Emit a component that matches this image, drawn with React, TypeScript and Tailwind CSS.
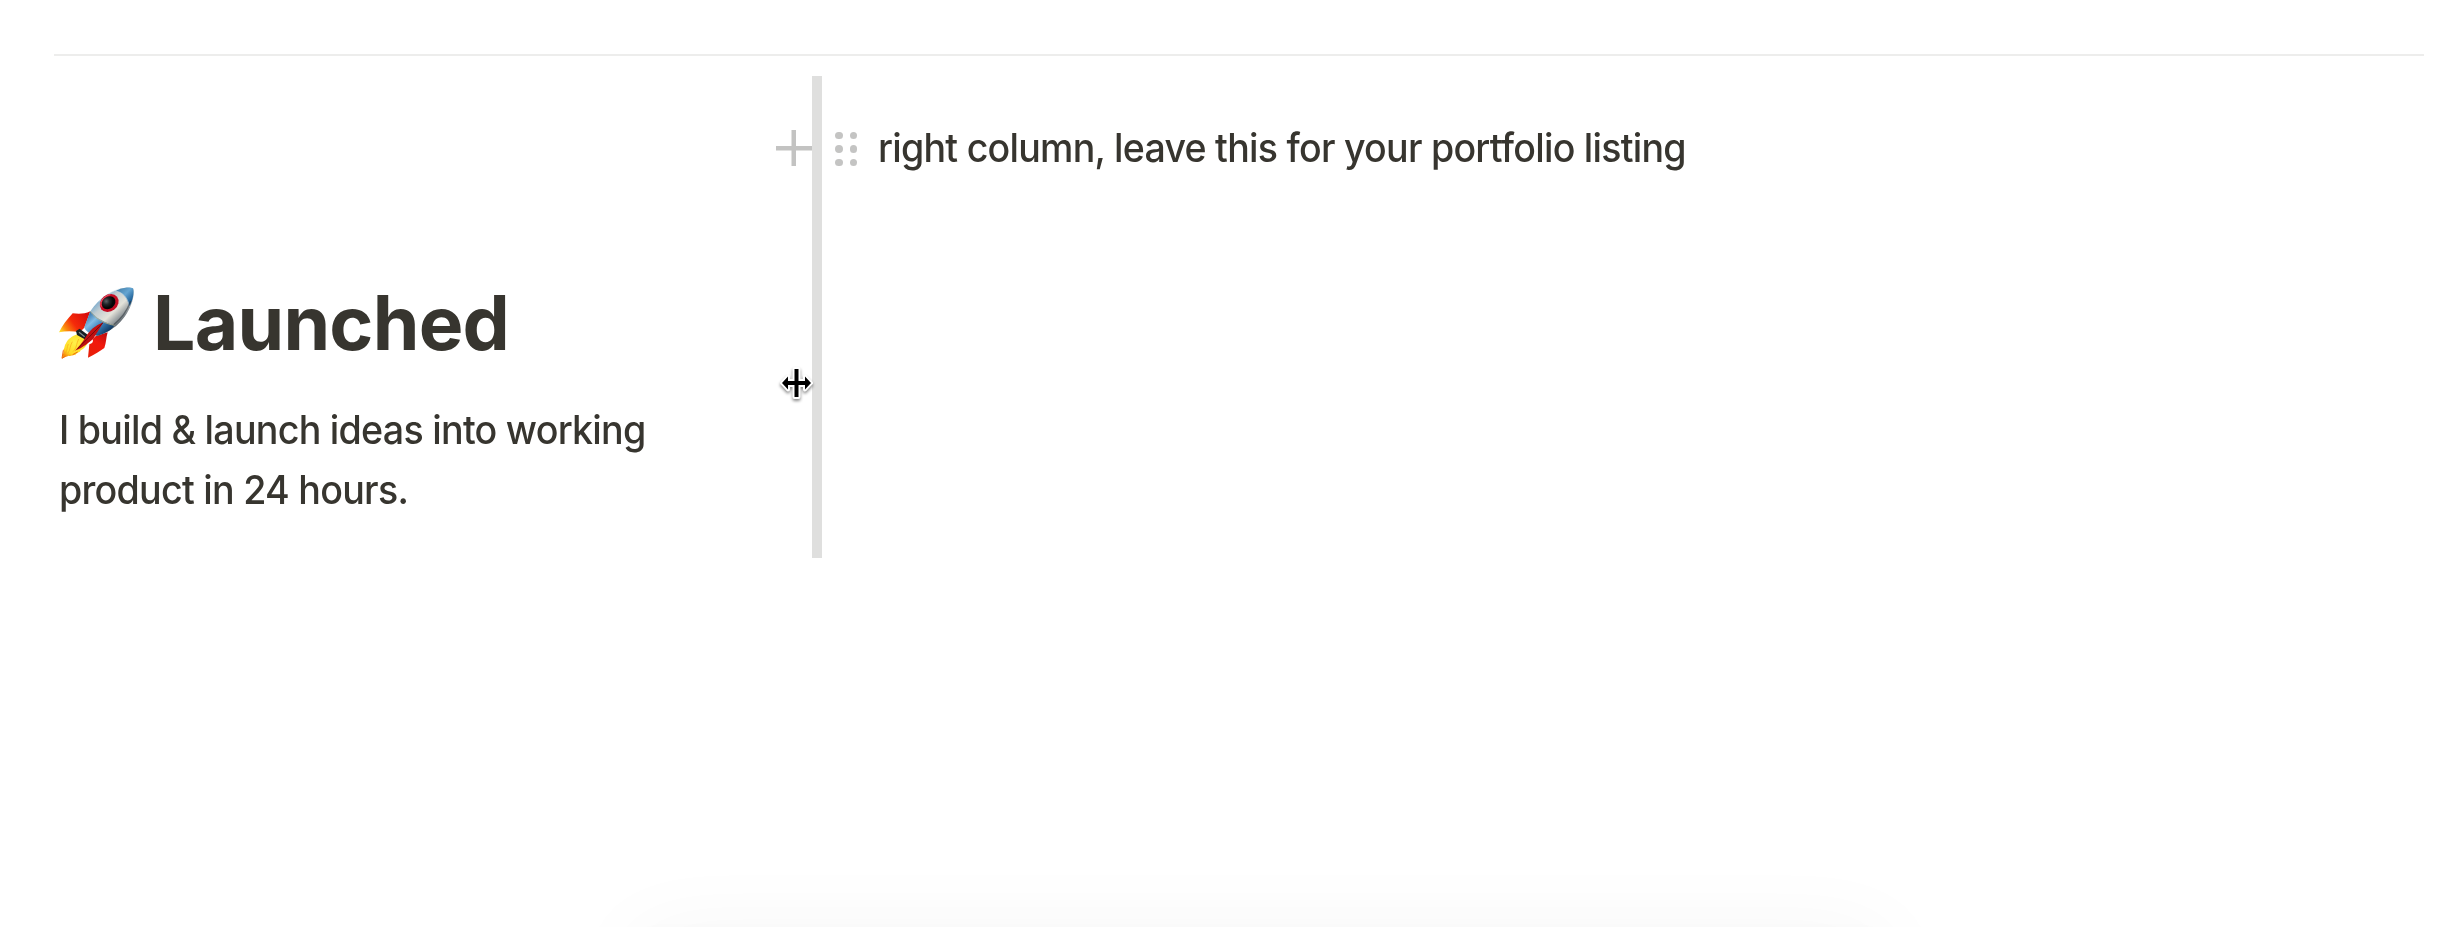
import React from "react";

const Rocket = () => (
	<svg
		className="h-[75px] w-[78px] shrink-0"
		viewBox="54 46 234 225"
		fill="none"
	>
		<defs>
			<linearGradient id="hull" x1="165" y1="85" x2="240" y2="165" gradientUnits="userSpaceOnUse">
				<stop offset="0" stopColor="#5f9fce" />
				<stop offset="0.3" stopColor="#c3cdd0" />
				<stop offset="0.6" stopColor="#e4e3da" />
				<stop offset="0.85" stopColor="#8b9296" />
				<stop offset="1" stopColor="#3b444c" />
			</linearGradient>
			<linearGradient id="nose" x1="238" y1="55" x2="276" y2="92" gradientUnits="userSpaceOnUse">
				<stop offset="0" stopColor="#4a86b0" />
				<stop offset="0.45" stopColor="#64a5d2" />
				<stop offset="1" stopColor="#14568f" />
			</linearGradient>
			<linearGradient id="tail" x1="140" y1="130" x2="195" y2="190" gradientUnits="userSpaceOnUse">
				<stop offset="0" stopColor="#2f6ea6" />
				<stop offset="0.35" stopColor="#82bbe4" />
				<stop offset="0.65" stopColor="#3a80b8" />
				<stop offset="1" stopColor="#123c66" />
			</linearGradient>
			<linearGradient id="finLeft" x1="140" y1="130" x2="62" y2="186" gradientUnits="userSpaceOnUse">
				<stop offset="0" stopColor="#d90d0b" />
				<stop offset="0.5" stopColor="#f52a0a" />
				<stop offset="0.8" stopColor="#fb8a0c" />
				<stop offset="1" stopColor="#ffe22a" />
			</linearGradient>
			<linearGradient id="finRight" x1="196" y1="190" x2="148" y2="262" gradientUnits="userSpaceOnUse">
				<stop offset="0" stopColor="#c4100f" />
				<stop offset="0.4" stopColor="#f2180c" />
				<stop offset="1" stopColor="#e62008" />
			</linearGradient>
			<radialGradient id="flame" cx="104" cy="216" r="48" gradientUnits="userSpaceOnUse">
				<stop offset="0" stopColor="#fff04a" />
				<stop offset="0.7" stopColor="#ffdc24" />
				<stop offset="1" stopColor="#f88f0c" />
			</radialGradient>
			<radialGradient id="glass" cx="203" cy="88" r="20" gradientUnits="userSpaceOnUse">
				<stop offset="0" stopColor="#5b6267" />
				<stop offset="0.5" stopColor="#202528" />
				<stop offset="1" stopColor="#050607" />
			</radialGradient>
		</defs>
		<path d="M151 122C132 131 114 130 98 128C82 145 67 164 57 185C78 181 98 181 119 185L136 168Z" fill="url(#finLeft)" />
		<path d="M203 185L168 195L158 206C161 214 157 219 148 221L144 261C164 251 181 241 193 232C199 216 198 202 203 185Z" fill="url(#finRight)" />
		<path d="M113 190C95 197 84 205 78 218C73 223 75 231 70 238C73 245 67 253 66 263C73 257 79 260 86 255C92 259 99 251 106 254C108 245 119 248 122 239C134 233 144 219 148 207L137 189Z" fill="url(#flame)" />
		<path d="M85 220C80 230 83 238 76 248M97 213C89 227 92 236 84 247M116 205C108 222 111 231 99 243" stroke="#f9a81a" strokeWidth="2" />
		<path d="M70 239L66 263L76 257M98 252L113 244" stroke="#ee6810" strokeWidth="3" />
		<path d="M108 181L119 174L144 193L137 207L111 193Z" fill="#171f23" />
		<path d="M117 185L134 198" stroke="#7e8d91" strokeWidth="4" />
		<path d="M256 51C222 54 177 80 151 122L133 170C137 183 153 193 173 195C218 184 260 146 277 92C283 71 284 58 279 53C273 50 265 50 256 51Z" fill="url(#hull)" />
		<path d="M151 122L133 170C137 183 153 193 173 195C196 189 216 177 224 164C201 159 171 146 151 122Z" fill="url(#tail)" />
		<path d="M256 51C246 52 236 55 227 61C246 65 261 77 268 108C278 89 284 66 279 53C274 50 265 50 256 51Z" fill="url(#nose)" />
		<path d="M151 122C169 148 199 160 224 164" stroke="#b3ad85" strokeWidth="2.5" />
		<path d="M227 61C248 65 264 81 268 108" stroke="#cad8df" strokeWidth="2" />
		<path d="M176 93C193 75 218 61 239 54" stroke="#e1eef4" strokeWidth="3" opacity="0.6" />
		<path d="M221 162C244 144 262 119 272 91" stroke="#2d343a" strokeWidth="4" opacity="0.55" />
		<ellipse cx="207.500" cy="97" rx="30" ry="25" transform="rotate(-38 207.500 97)" fill="#c40d23" />
		<ellipse cx="206" cy="96" rx="22" ry="18" transform="rotate(-38 206 96)" fill="url(#glass)" />
		<path d="M184 108C177 91 195 75 211 72" stroke="#f16879" strokeWidth="2.500" />
		<path d="M190 155C164 166 150 178 137 199C128 216 115 229 105 240C129 231 147 215 160 204C168 190 180 174 190 155Z" fill="#c10f10" />
		<path d="M188 157C165 182 145 201 113 234" stroke="#6f0a0c" strokeWidth="3" />
	</svg>
);

const PlusIcon = () => (
	<svg className="h-9 w-9" viewBox="0 0 36 36" fill="#c3c3c2">
		<rect x="0" y="16" width="36" height="4.500" />
		<rect x="15.500" y="0" width="4.500" height="36" />
	</svg>
);

const DragHandle = () => (
	<div className="grid grid-cols-2 content-start gap-x-[7px] gap-y-[6px]">
		{[0, 1, 2, 3, 4, 5].map((dot) => (
			<span key={dot} className="h-[7.500px] w-[7.500px] rounded-full bg-[#c4c4c3]" />
		))}
	</div>
);

const ResizeCursor = () => (
	<svg
		className="absolute left-[-34px] top-[288px] h-[40px] w-[40px] drop-shadow-[0_2px_1.5px_rgba(0,0,0,0.45)]"
		viewBox="0 0 40 40"
	>
		<path
			d="M16.500 5H20.500V17H27V12.500L33 19L27 25.500V21H20.500V33H16.500V21H10V25.500L4 19L10 12.500V17H16.500Z"
			fill="#000"
			stroke="#fff"
			strokeWidth="4"
			strokeLinejoin="round"
			paintOrder="stroke"
		/>
	</svg>
);

const App = () => {
	return (
		<div className="flex h-[927px] w-full flex-col overflow-hidden bg-white font-['Inter',sans-serif] text-[#37352f]">
			<div className="ml-[54px] mr-6 mt-[54px] h-0.5 shrink-0 bg-[#ededec]" />
			<div className="mt-5 flex h-[482px] shrink-0">
				<div className="flex w-[812px] justify-between pl-[58px]">
					<div className="pt-[202px]">
						<h1 className="flex h-[90px] items-center whitespace-pre text-[75px] font-[650] leading-[90px] tracking-[-0.01em]">
							<Rocket />
							<span className="ml-[17px]">Launched</span>
						</h1>
						<p className="ml-px mt-[32px] w-[640px] origin-left scale-x-[0.953] text-[39.500px] font-[450] leading-[60px] tracking-[-0.02em]">
							I build &amp; launch ideas into working
							<br />
							product in 24 hours.
						</p>
					</div>
					<div className="pt-[54px]">
						<PlusIcon />
					</div>
				</div>
				<div className="relative w-[10px] shrink-0 bg-[#dfdfde]">
					<ResizeCursor />
				</div>
				<div className="flex pl-[13px] pt-[55.500px]">
					<DragHandle />
					<p className="-mt-[13.500px] ml-[21px] origin-left scale-x-[0.951] whitespace-nowrap text-[39.500px] font-[450] leading-[60px] tracking-[-0.02em]">
						right column, leave this for your portfolio listing
					</p>
				</div>
			</div>
			<div className="mx-auto mt-[376px] h-20 w-[1250px] shrink-0 translate-x-[36px] shadow-[0_0_90px_rgba(15,15,15,0.045),0_0_30px_rgba(15,15,15,0.015)]" />
		</div>
	);
};

export default App;
